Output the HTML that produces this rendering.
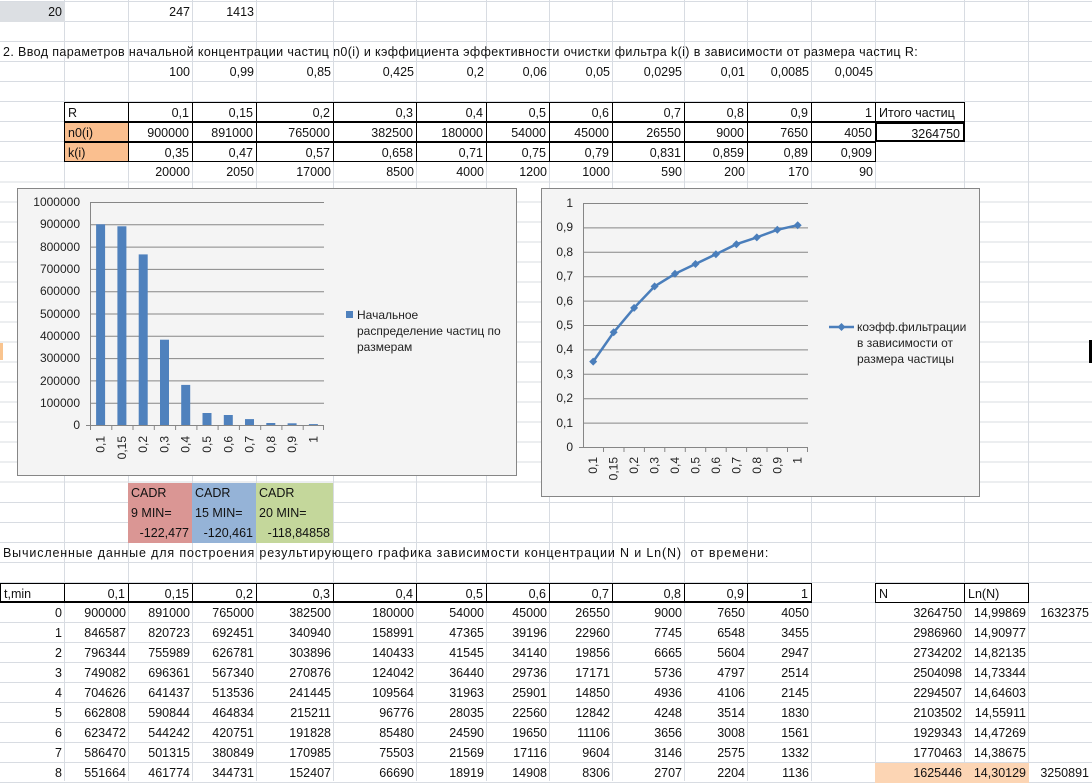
<!DOCTYPE html>
<html><head><meta charset="utf-8">
<style>
body{margin:0;width:1092px;height:781px;overflow:hidden;position:relative;background:#fff;
background-image:repeating-linear-gradient(to bottom,transparent 0,transparent 1px,#d8dce2 1px,#d8dce2 2px,transparent 2px,transparent 20.03px);
font-family:"Liberation Sans",sans-serif;font-size:12.5px;color:#111}
.v{position:absolute;top:0;width:1px;height:781px;background:#d8dce2}
.row{position:absolute;left:0;width:1092px;height:20px}
.c{position:absolute;top:0;height:20px;line-height:20px;box-sizing:border-box;padding:0 3px;white-space:nowrap;overflow:visible}
.r{text-align:right}
.A{left:0;width:65px}.B{left:64px;width:65px}.C{left:128px;width:65px}.D{left:192px;width:65px}
.E{left:256px;width:78px}.F{left:333px;width:84px}.G{left:416px;width:71px}.H{left:486px;width:64px}
.I{left:549px;width:64px}.J{left:612px;width:73px}.K{left:684px;width:64px}.L{left:747px;width:65px}
.M{left:811px;width:65px}.N{left:875px;width:90px}.O{left:964px;width:65px}.P{left:1028px;width:64px}
.bx{border:1px solid #000}
svg{position:absolute;left:0;top:0}
</style></head><body>
<div class="v" style="left:64px"></div><div class="v" style="left:128px"></div><div class="v" style="left:192px"></div><div class="v" style="left:256px"></div><div class="v" style="left:333px"></div><div class="v" style="left:416px"></div><div class="v" style="left:486px"></div><div class="v" style="left:549px"></div><div class="v" style="left:612px"></div><div class="v" style="left:684px"></div><div class="v" style="left:747px"></div><div class="v" style="left:811px"></div><div class="v" style="left:875px"></div><div class="v" style="left:964px"></div><div class="v" style="left:1028px"></div>
<div style="position:absolute;left:0;top:343px;width:3px;height:17px;background:#f9c48f"></div>
<div style="position:absolute;left:1089px;top:340px;width:3px;height:23px;background:#000"></div>

<div class="row" style="top:2px"><div class="c A r" style="background:#dcdfe3">20</div><div class="c C r">247</div><div class="c D r">1413</div></div>
<div class="row" style="top:42px"><div class="c A" style="width:1000px;letter-spacing:0.38px">2. Ввод параметров начальной концентрации частиц n0(i) и кэффициента эффективности очистки фильтра k(i) в зависимости от размера частиц R:</div></div>
<div class="row" style="top:62px"><div class="c C r">100</div><div class="c D r">0,99</div><div class="c E r">0,85</div><div class="c F r">0,425</div><div class="c G r">0,2</div><div class="c H r">0,06</div><div class="c I r">0,05</div><div class="c J r">0,0295</div><div class="c K r">0,01</div><div class="c L r">0,0085</div><div class="c M r">0,0045</div></div>
<div class="row" style="top:102px"><div class="c B bx">R</div><div class="c C r bx">0,1</div><div class="c D r bx">0,15</div><div class="c E r bx">0,2</div><div class="c F r bx">0,3</div><div class="c G r bx">0,4</div><div class="c H r bx">0,5</div><div class="c I r bx">0,6</div><div class="c J r bx">0,7</div><div class="c K r bx">0,8</div><div class="c L r bx">0,9</div><div class="c M r bx">1</div><div class="c N bx">Итого частиц</div></div>
<div class="row" style="top:122px"><div class="c B bx" style="background:#fabf8f">n0(i)</div><div class="c C r bx">900000</div><div class="c D r bx">891000</div><div class="c E r bx">765000</div><div class="c F r bx">382500</div><div class="c G r bx">180000</div><div class="c H r bx">54000</div><div class="c I r bx">45000</div><div class="c J r bx">26550</div><div class="c K r bx">9000</div><div class="c L r bx">7650</div><div class="c M r bx">4050</div><div class="c N r" style="border:2px solid #000">3264750</div></div>
<div class="row" style="top:142px"><div class="c B bx" style="background:#fabf8f">k(i)</div><div class="c C r bx">0,35</div><div class="c D r bx">0,47</div><div class="c E r bx">0,57</div><div class="c F r bx">0,658</div><div class="c G r bx">0,71</div><div class="c H r bx">0,75</div><div class="c I r bx">0,79</div><div class="c J r bx">0,831</div><div class="c K r bx">0,859</div><div class="c L r bx">0,89</div><div class="c M r bx">0,909</div></div>
<div class="row" style="top:162px"><div class="c C r">20000</div><div class="c D r">2050</div><div class="c E r">17000</div><div class="c F r">8500</div><div class="c G r">4000</div><div class="c H r">1200</div><div class="c I r">1000</div><div class="c J r">590</div><div class="c K r">200</div><div class="c L r">170</div><div class="c M r">90</div></div>

<div class="row" style="top:483px"><div class="c C" style="background:#da9694;width:64px">CADR</div><div class="c D" style="background:#95b3d7;width:64px">CADR</div><div class="c E" style="background:#c4d79b;width:77px">CADR</div></div>
<div class="row" style="top:503px"><div class="c C" style="background:#da9694;width:64px">9 MIN=</div><div class="c D" style="background:#95b3d7;width:64px">15 MIN=</div><div class="c E" style="background:#c4d79b;width:77px">20 MIN=</div></div>
<div class="row" style="top:523px"><div class="c C r" style="background:#da9694;width:64px">-122,477</div><div class="c D r" style="background:#95b3d7;width:64px">-120,461</div><div class="c E r" style="background:#c4d79b;width:77px">-118,84858</div></div>
<div class="row" style="top:543px"><div class="c A" style="width:900px;letter-spacing:0.85px">Вычисленные данные для построения результирующего графика зависимости концентрации N и Ln(N)&nbsp; от времени:</div></div>

<div class="row" style="top:583px"><div class="c A bx" style="border-bottom-width:2px">t,min</div><div class="c B r bx" style="border-bottom-width:2px">0,1</div><div class="c C r bx" style="border-bottom-width:2px">0,15</div><div class="c D r bx" style="border-bottom-width:2px">0,2</div><div class="c E r bx" style="border-bottom-width:2px">0,3</div><div class="c F r bx" style="border-bottom-width:2px">0,4</div><div class="c G r bx" style="border-bottom-width:2px">0,5</div><div class="c H r bx" style="border-bottom-width:2px">0,6</div><div class="c I r bx" style="border-bottom-width:2px">0,7</div><div class="c J r bx" style="border-bottom-width:2px">0,8</div><div class="c K r bx" style="border-bottom-width:2px">0,9</div><div class="c L r bx" style="border-bottom-width:2px">1</div><div class="c N bx">N</div><div class="c O bx">Ln(N)</div></div>
<div class="row" style="top:603px"><div class="c A r">0</div><div class="c B r">900000</div><div class="c C r">891000</div><div class="c D r">765000</div><div class="c E r">382500</div><div class="c F r">180000</div><div class="c G r">54000</div><div class="c H r">45000</div><div class="c I r">26550</div><div class="c J r">9000</div><div class="c K r">7650</div><div class="c L r">4050</div><div class="c N r">3264750</div><div class="c O r">14,99869</div><div class="c P r">1632375</div></div>
<div class="row" style="top:623px"><div class="c A r">1</div><div class="c B r">846587</div><div class="c C r">820723</div><div class="c D r">692451</div><div class="c E r">340940</div><div class="c F r">158991</div><div class="c G r">47365</div><div class="c H r">39196</div><div class="c I r">22960</div><div class="c J r">7745</div><div class="c K r">6548</div><div class="c L r">3455</div><div class="c N r">2986960</div><div class="c O r">14,90977</div></div>
<div class="row" style="top:643px"><div class="c A r">2</div><div class="c B r">796344</div><div class="c C r">755989</div><div class="c D r">626781</div><div class="c E r">303896</div><div class="c F r">140433</div><div class="c G r">41545</div><div class="c H r">34140</div><div class="c I r">19856</div><div class="c J r">6665</div><div class="c K r">5604</div><div class="c L r">2947</div><div class="c N r">2734202</div><div class="c O r">14,82135</div></div>
<div class="row" style="top:663px"><div class="c A r">3</div><div class="c B r">749082</div><div class="c C r">696361</div><div class="c D r">567340</div><div class="c E r">270876</div><div class="c F r">124042</div><div class="c G r">36440</div><div class="c H r">29736</div><div class="c I r">17171</div><div class="c J r">5736</div><div class="c K r">4797</div><div class="c L r">2514</div><div class="c N r">2504098</div><div class="c O r">14,73344</div></div>
<div class="row" style="top:683px"><div class="c A r">4</div><div class="c B r">704626</div><div class="c C r">641437</div><div class="c D r">513536</div><div class="c E r">241445</div><div class="c F r">109564</div><div class="c G r">31963</div><div class="c H r">25901</div><div class="c I r">14850</div><div class="c J r">4936</div><div class="c K r">4106</div><div class="c L r">2145</div><div class="c N r">2294507</div><div class="c O r">14,64603</div></div>
<div class="row" style="top:703px"><div class="c A r">5</div><div class="c B r">662808</div><div class="c C r">590844</div><div class="c D r">464834</div><div class="c E r">215211</div><div class="c F r">96776</div><div class="c G r">28035</div><div class="c H r">22560</div><div class="c I r">12842</div><div class="c J r">4248</div><div class="c K r">3514</div><div class="c L r">1830</div><div class="c N r">2103502</div><div class="c O r">14,55911</div></div>
<div class="row" style="top:723px"><div class="c A r">6</div><div class="c B r">623472</div><div class="c C r">544242</div><div class="c D r">420751</div><div class="c E r">191828</div><div class="c F r">85480</div><div class="c G r">24590</div><div class="c H r">19650</div><div class="c I r">11106</div><div class="c J r">3656</div><div class="c K r">3008</div><div class="c L r">1561</div><div class="c N r">1929343</div><div class="c O r">14,47269</div></div>
<div class="row" style="top:743px"><div class="c A r">7</div><div class="c B r">586470</div><div class="c C r">501315</div><div class="c D r">380849</div><div class="c E r">170985</div><div class="c F r">75503</div><div class="c G r">21569</div><div class="c H r">17116</div><div class="c I r">9604</div><div class="c J r">3146</div><div class="c K r">2575</div><div class="c L r">1332</div><div class="c N r">1770463</div><div class="c O r">14,38675</div></div>
<div class="row" style="top:763px"><div class="c A r">8</div><div class="c B r">551664</div><div class="c C r">461774</div><div class="c D r">344731</div><div class="c E r">152407</div><div class="c F r">66690</div><div class="c G r">18919</div><div class="c H r">14908</div><div class="c I r">8306</div><div class="c J r">2707</div><div class="c K r">2204</div><div class="c L r">1136</div><div class="c N r" style="background:#fcd5b4">1625446</div><div class="c O r" style="background:#fcd5b4">14,30129</div><div class="c P r">3250891</div></div>

<svg width="1092" height="781" font-family="Liberation Sans, sans-serif" font-size="12" fill="#222">
<rect x="17.5" y="188.5" width="499" height="287" fill="#f4f4f4" stroke="#868686"/>
<g stroke="#868686" stroke-width="1">
<line x1="90" y1="202.5" x2="324" y2="202.5"/><line x1="90" y1="224.8" x2="324" y2="224.8"/><line x1="90" y1="247.1" x2="324" y2="247.1"/><line x1="90" y1="269.4" x2="324" y2="269.4"/><line x1="90" y1="291.7" x2="324" y2="291.7"/><line x1="90" y1="314" x2="324" y2="314"/><line x1="90" y1="336.3" x2="324" y2="336.3"/><line x1="90" y1="358.6" x2="324" y2="358.6"/><line x1="90" y1="380.9" x2="324" y2="380.9"/><line x1="90" y1="403.2" x2="324" y2="403.2"/>
</g>
<g fill="#4f81bd">
<rect x="96.1" y="224.3" width="9" height="200.7"/><rect x="117.4" y="226.3" width="9" height="198.7"/><rect x="138.7" y="254.4" width="9" height="170.6"/><rect x="160" y="339.7" width="9" height="85.3"/><rect x="181.2" y="384.9" width="9" height="40.1"/><rect x="202.5" y="413" width="9" height="12"/><rect x="223.8" y="415" width="9" height="10"/><rect x="245" y="419.1" width="9" height="5.9"/><rect x="266.3" y="423" width="9" height="2"/><rect x="287.6" y="423.3" width="9" height="1.7"/><rect x="308.9" y="424.1" width="9" height="0.9"/>
</g>
<g stroke="#868686"><line x1="90.5" y1="202" x2="90.5" y2="425"/><line x1="86" y1="425.5" x2="324" y2="425.5"/>
<line x1="90.5" y1="425" x2="90.5" y2="430"/><line x1="111.8" y1="425" x2="111.8" y2="430"/><line x1="133" y1="425" x2="133" y2="430"/><line x1="154.3" y1="425" x2="154.3" y2="430"/><line x1="175.6" y1="425" x2="175.6" y2="430"/><line x1="196.9" y1="425" x2="196.9" y2="430"/><line x1="218.1" y1="425" x2="218.1" y2="430"/><line x1="239.4" y1="425" x2="239.4" y2="430"/><line x1="260.7" y1="425" x2="260.7" y2="430"/><line x1="281.9" y1="425" x2="281.9" y2="430"/><line x1="303.2" y1="425" x2="303.2" y2="430"/><line x1="323.5" y1="425" x2="323.5" y2="430"/></g>
<g text-anchor="end">
<text x="80" y="206">1000000</text><text x="80" y="228">900000</text><text x="80" y="251">800000</text><text x="80" y="273">700000</text><text x="80" y="295">600000</text><text x="80" y="318">500000</text><text x="80" y="340">400000</text><text x="80" y="362">300000</text><text x="80" y="385">200000</text><text x="80" y="407">100000</text><text x="80" y="429">0</text>
<text transform="translate(104.6,436) rotate(-90)">0,1</text><text transform="translate(125.9,436) rotate(-90)">0,15</text><text transform="translate(147.2,436) rotate(-90)">0,2</text><text transform="translate(168.5,436) rotate(-90)">0,3</text><text transform="translate(189.7,436) rotate(-90)">0,4</text><text transform="translate(211,436) rotate(-90)">0,5</text><text transform="translate(232.3,436) rotate(-90)">0,6</text><text transform="translate(253.5,436) rotate(-90)">0,7</text><text transform="translate(274.8,436) rotate(-90)">0,8</text><text transform="translate(296.1,436) rotate(-90)">0,9</text><text transform="translate(317.4,436) rotate(-90)">1</text>
</g>
<rect x="346" y="311" width="7" height="7" fill="#4f81bd"/>
<text x="357" y="319">Начальное</text><text x="357" y="335">распределение частиц по</text><text x="357" y="351">размерам</text>

<rect x="541.5" y="188.5" width="438" height="308" fill="#f4f4f4" stroke="#868686"/>
<g stroke="#868686">
<line x1="583" y1="203.5" x2="808" y2="203.5"/><line x1="583" y1="227.9" x2="808" y2="227.9"/><line x1="583" y1="252.3" x2="808" y2="252.3"/><line x1="583" y1="276.7" x2="808" y2="276.7"/><line x1="583" y1="301.1" x2="808" y2="301.1"/><line x1="583" y1="325.5" x2="808" y2="325.5"/><line x1="583" y1="349.9" x2="808" y2="349.9"/><line x1="583" y1="374.3" x2="808" y2="374.3"/><line x1="583" y1="398.7" x2="808" y2="398.7"/><line x1="583" y1="423.1" x2="808" y2="423.1"/>
<line x1="583.5" y1="203" x2="583.5" y2="447"/><line x1="579" y1="447.5" x2="808" y2="447.5"/>
<line x1="603.5" y1="447" x2="603.5" y2="452"/><line x1="624" y1="447" x2="624" y2="452"/><line x1="644.4" y1="447" x2="644.4" y2="452"/><line x1="664.8" y1="447" x2="664.8" y2="452"/><line x1="685.3" y1="447" x2="685.3" y2="452"/><line x1="705.7" y1="447" x2="705.7" y2="452"/><line x1="726.2" y1="447" x2="726.2" y2="452"/><line x1="746.6" y1="447" x2="746.6" y2="452"/><line x1="767" y1="447" x2="767" y2="452"/><line x1="787.5" y1="447" x2="787.5" y2="452"/><line x1="807.5" y1="447" x2="807.5" y2="452"/>
</g>
<polyline fill="none" stroke="#4a7ebb" stroke-width="2.5" points="593.2,361.6 613.7,332.3 634.1,307.9 654.6,286.4 675,273.8 695.5,264 715.9,254.2 736.4,244.2 756.8,237.4 777.3,229.8 797.7,225.2"/>
<g fill="#4a7ebb">
<path d="M593.2 357.6l4 4-4 4-4-4z"/><path d="M613.7 328.3l4 4-4 4-4-4z"/><path d="M634.1 303.9l4 4-4 4-4-4z"/><path d="M654.6 282.4l4 4-4 4-4-4z"/><path d="M675 269.8l4 4-4 4-4-4z"/><path d="M695.5 260l4 4-4 4-4-4z"/><path d="M715.9 250.2l4 4-4 4-4-4z"/><path d="M736.4 240.2l4 4-4 4-4-4z"/><path d="M756.8 233.4l4 4-4 4-4-4z"/><path d="M777.3 225.8l4 4-4 4-4-4z"/><path d="M797.7 221.2l4 4-4 4-4-4z"/>
<path d="M841.5 323l4 4-4 4-4-4z"/>
</g>
<line x1="829" y1="327" x2="854" y2="327" stroke="#4a7ebb" stroke-width="2.5"/>
<g text-anchor="end">
<text x="573" y="207">1</text><text x="573" y="231">0,9</text><text x="573" y="256">0,8</text><text x="573" y="280">0,7</text><text x="573" y="305">0,6</text><text x="573" y="329">0,5</text><text x="573" y="353">0,4</text><text x="573" y="378">0,3</text><text x="573" y="402">0,2</text><text x="573" y="427">0,1</text><text x="573" y="451">0</text>
<text transform="translate(597.2,457) rotate(-90)">0,1</text><text transform="translate(617.7,457) rotate(-90)">0,15</text><text transform="translate(638.1,457) rotate(-90)">0,2</text><text transform="translate(658.6,457) rotate(-90)">0,3</text><text transform="translate(679,457) rotate(-90)">0,4</text><text transform="translate(699.5,457) rotate(-90)">0,5</text><text transform="translate(719.9,457) rotate(-90)">0,6</text><text transform="translate(740.4,457) rotate(-90)">0,7</text><text transform="translate(760.8,457) rotate(-90)">0,8</text><text transform="translate(781.3,457) rotate(-90)">0,9</text><text transform="translate(801.7,457) rotate(-90)">1</text>
</g>
<text x="857" y="331">коэфф.фильтрации</text><text x="857" y="347">в зависимости от</text><text x="857" y="363">размера частицы</text>
</svg>
</body></html>
